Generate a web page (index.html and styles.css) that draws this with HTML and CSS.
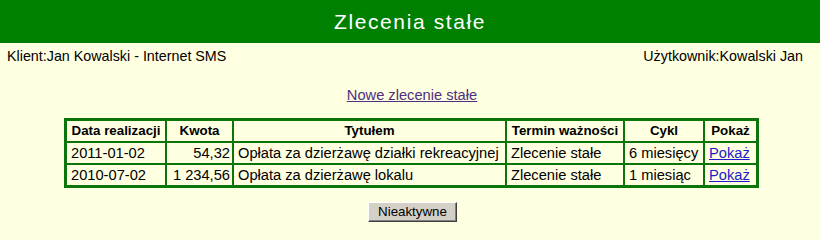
FILE: index.html
```html
<!DOCTYPE html>
<html lang="pl">
<head>
<meta charset="utf-8">
<title>Zlecenia stałe</title>
<link rel="stylesheet" href="styles.css">
</head>
<body>
<div class="titlebar">Zlecenia stałe</div>
<div class="info">
  <span>Klient:Jan Kowalski - Internet SMS</span>
  <span>Użytkownik:Kowalski Jan</span>
</div>
<div class="newlink"><a href="#" class="visited">Nowe zlecenie stałe</a></div>
<div class="tablewrap">
<table class="orders">
  <thead>
    <tr>
      <th class="c1">Data realizacji</th>
      <th class="c2">Kwota</th>
      <th class="c3">Tytułem</th>
      <th class="c4">Termin ważności</th>
      <th class="c5">Cykl</th>
      <th class="c6">Pokaż</th>
    </tr>
  </thead>
  <tbody>
    <tr>
      <td>2011-01-02</td>
      <td class="num">54,32</td>
      <td>Opłata za dzierżawę działki rekreacyjnej</td>
      <td>Zlecenie stałe</td>
      <td>6 miesięcy</td>
      <td><a href="#" class="show">Pokaż</a></td>
    </tr>
    <tr>
      <td>2010-07-02</td>
      <td class="num">1 234,56</td>
      <td>Opłata za dzierżawę lokalu</td>
      <td>Zlecenie stałe</td>
      <td>1 miesiąc</td>
      <td><a href="#" class="show">Pokaż</a></td>
    </tr>
  </tbody>
</table>
</div>
<div class="actions"><button class="btn" type="button">Nieaktywne</button></div>
</body>
</html>
```
FILE: styles.css
```css
html, body {
  margin: 0;
  padding: 0;
  background: #ffffe1;
  font-family: "Liberation Sans", Arial, sans-serif;
  color: #000;
}

.titlebar {
  height: 43px;
  line-height: 43px;
  background: #008000;
  color: #fff;
  text-align: center;
  font-size: 21px;
  letter-spacing: 1.6px;
}

.info {
  display: flex;
  justify-content: space-between;
  padding: 5px 17px 0 7px;
  font-size: 14.3px;
  line-height: 16px;
}

.newlink {
  margin-top: 22px;
  padding-left: 4px;
  text-align: center;
  font-size: 14.67px;
  line-height: 18px;
}

.newlink a.visited {
  color: #4f2f7f;
  text-decoration: underline;
}

.tablewrap {
  padding-left: 3px;
  margin-top: 14px;
}

.orders {
  margin: 0 auto;
  width: 695px;
  table-layout: fixed;
  border-collapse: separate;
  border-spacing: 0;
  border: 2px solid #0b750b;
}

.orders th,
.orders td {
  box-sizing: border-box;
  border: 1px solid #0b750b;
  height: 22px;
  padding: 0 2px 0 4px;
  line-height: 20px;
  white-space: nowrap;
  overflow: hidden;
  text-align: left;
  font-size: 14.67px;
  font-weight: normal;
}

.orders th {
  text-align: center;
  font-weight: bold;
  font-size: 13.33px;
  padding: 0 2px;
}

.orders .c1 { width: 100px; }
.orders .c2 { width: 67px; }
.orders .c3 { width: 273px; }
.orders .c4 { width: 118px; }
.orders .c5 { width: 80px; }
.orders .c6 { width: 53px; }

.orders td.num {
  text-align: right;
}

.orders a.show {
  color: #1c1cc8;
  text-decoration: underline;
}

.actions {
  margin-top: 14px;
  text-align: center;
  padding-left: 5px;
}

.btn {
  width: 89px;
  height: 20px;
  padding: 0;
  background: #d4d0c8;
  border-top: 1px solid #ffffff;
  border-left: 1px solid #ffffff;
  border-right: 1px solid #404040;
  border-bottom: 1px solid #404040;
  box-shadow: inset -1px -1px 0 #808080;
  font-family: "Liberation Sans", Arial, sans-serif;
  font-size: 13.33px;
  color: #000;
  line-height: 18px;
}
```
